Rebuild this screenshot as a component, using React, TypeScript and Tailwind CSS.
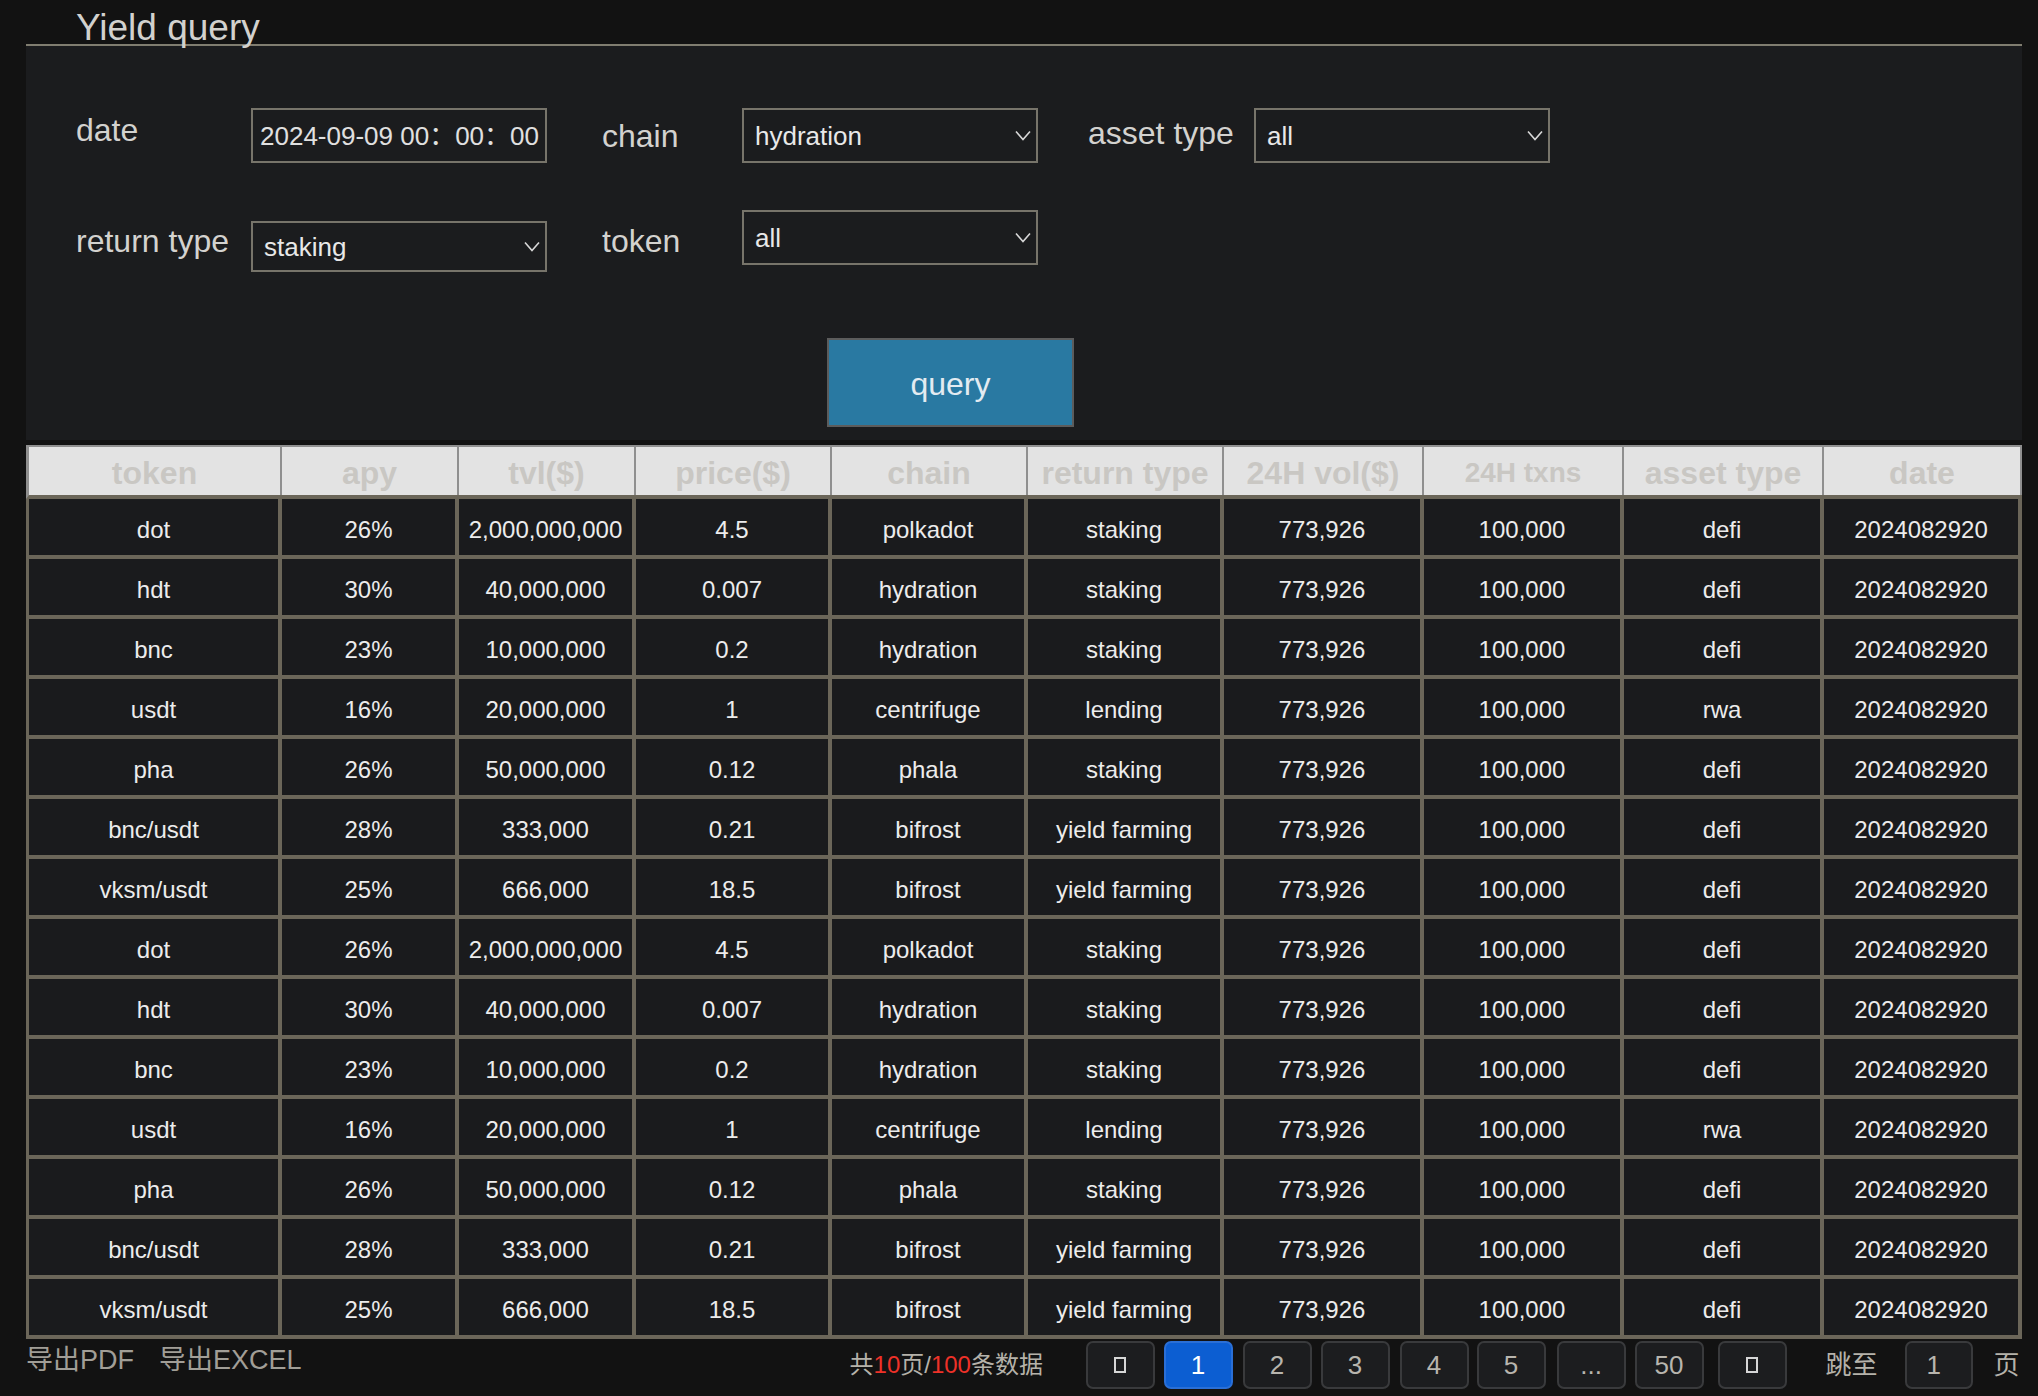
import React from "react";

const font = { fontFamily: '"Liberation Sans", Arial, "Noto Sans CJK SC", sans-serif' };

const rows = [
  ["dot", "26%", "2,000,000,000", "4.5", "polkadot", "staking", "773,926", "100,000", "defi", "2024082920"],
  ["hdt", "30%", "40,000,000", "0.007", "hydration", "staking", "773,926", "100,000", "defi", "2024082920"],
  ["bnc", "23%", "10,000,000", "0.2", "hydration", "staking", "773,926", "100,000", "defi", "2024082920"],
  ["usdt", "16%", "20,000,000", "1", "centrifuge", "lending", "773,926", "100,000", "rwa", "2024082920"],
  ["pha", "26%", "50,000,000", "0.12", "phala", "staking", "773,926", "100,000", "defi", "2024082920"],
  ["bnc/usdt", "28%", "333,000", "0.21", "bifrost", "yield farming", "773,926", "100,000", "defi", "2024082920"],
  ["vksm/usdt", "25%", "666,000", "18.5", "bifrost", "yield farming", "773,926", "100,000", "defi", "2024082920"],
];

const allRows = [...rows, ...rows];

const headers = ["token", "apy", "tvl($)", "price($)", "chain", "return type", "24H vol($)", "24H txns", "asset type", "date"];

const gridCols =
  "grid grid-cols-[253px_177px_177px_196px_196px_196px_200px_200px_200px_198px]";

function Chevron() {
  return (
    <svg width="16" height="11" viewBox="0 0 16 11" className="shrink-0">
      <polyline points="1,1.5 8,9.5 15,1.5" fill="none" stroke="#d8d8d8" strokeWidth="1.6" />
    </svg>
  );
}

function Select({ value, className = "" }: { value: string; className?: string }) {
  return (
    <div
      className={`flex w-[296px] items-center justify-between border-2 border-[#77746a] pl-[11px] pr-[5px] text-[26px] text-[#e8e8e8] ${className}`}
    >
      <span className="leading-none">{value}</span>
      <Chevron />
    </div>
  );
}

function Tofu() {
  // the arrow glyphs render as empty boxes in the original
  return <span className="block h-[16px] w-[12px] border-2 border-[#d6d6d6]" />;
}

const pages = [
  { label: "prev", cls: "ml-0" },
  { label: "1", cls: "ml-[9px]", active: true },
  { label: "2", cls: "ml-[10px]" },
  { label: "3", cls: "ml-[9px]" },
  { label: "4", cls: "ml-[10px]" },
  { label: "5", cls: "ml-[8px]" },
  { label: "...", cls: "ml-[11px]" },
  { label: "50", cls: "ml-[9px]" },
  { label: "next", cls: "ml-[14px]" },
];

export default function App() {
  return (
    <div className="h-[1396px] w-[2038px] overflow-hidden bg-[#121212]" style={font}>
      <div className="h-[44px] pl-[76px] pt-[9px] text-[37px] leading-none text-[#d2d1ce]">Yield query</div>

      {/* filter panel */}
      <section className="ml-[26px] h-[396px] w-[1996px] border-t-2 border-[#807d70] bg-[#1b1c1e]">
        <div className="mt-[62px] flex h-[55px] items-center pl-[50px]">
          <span className="mb-[11px] w-[175px] text-[32px] leading-none text-[#d3d2cf]">date</span>
          <div className="flex h-[55px] w-[296px] items-center border-2 border-[#77746a] pl-[7px] text-[26px] leading-none text-[#e0e0e0]">
            2024-09-09 00：00：00
          </div>
          <span className="ml-[55px] w-[140px] text-[32px] leading-none text-[#d3d2cf]">chain</span>
          <Select value="hydration" className="h-[55px]" />
          <span className="mb-[5px] ml-[50px] w-[166px] text-[32px] leading-none text-[#d3d2cf]">asset type</span>
          <Select value="all" className="h-[55px]" />
        </div>

        <div className="mt-[47px] flex h-[62px] items-start pl-[50px]">
          <span className="mt-[15px] w-[175px] text-[32px] leading-none text-[#d3d2cf]">return type</span>
          <Select value="staking" className="mt-[11px] h-[51px]" />
          <span className="ml-[55px] mt-[15px] w-[140px] text-[32px] leading-none text-[#d3d2cf]">token</span>
          <Select value="all" className="h-[55px]" />
        </div>

        <button className="ml-[801px] mt-[66px] flex h-[89px] w-[247px] items-center justify-center border-2 border-[#5c5c5c] bg-[#2979a2] pt-[2px] text-[32px] text-[#e3ebf1]">
          query
        </button>
      </section>

      {/* table */}
      <div className="ml-[26px] mt-[5px] w-[1996px]">
        <div
          className={`${gridCols} h-[54px] border-l-[3px] border-t-2 border-b-4 border-l-[#8f8f8f] border-t-[#8f8f8f] border-b-[#6b6659] bg-[#e3e3e3]`}
        >
          {headers.map((h) => (
            <div
              key={h}
              className={`flex items-center justify-center border-r-2 border-[#8f8f8f] pt-[3px] font-bold leading-none text-[#c9c7c3] ${
                h === "24H txns" ? "text-[28px]" : "text-[32px]"
              }`}
            >
              {h}
            </div>
          ))}
        </div>
        {allRows.map((row, i) => (
          <div key={i} className={`${gridCols} h-[60px] border-b-4 border-l-[3px] border-[#6b6659] bg-[#1a1b1d]`}>
            {row.map((cell, j) => (
              <div
                key={j}
                className="flex items-center justify-center border-r-4 border-[#6b6659] pt-[5px] text-[24px] leading-none text-[#ececec]"
              >
                {cell}
              </div>
            ))}
          </div>
        ))}
      </div>

      {/* footer */}
      <div className="mt-[2px] flex h-[48px] items-center">
        <div className="mb-[10px] ml-[26px] flex gap-[25px] text-[27px] leading-none text-[#a19e97]">
          <span>导出PDF</span>
          <span>导出EXCEL</span>
        </div>
        <div className="ml-[548px] w-[236px] text-[24px] leading-none text-[#b5b2aa]">
          共<span className="text-[#ee3128]">10</span>页/<span className="text-[#ee3128]">100</span>条数据
        </div>
        {pages.map((p) => (
          <div
            key={p.label}
            className={`${p.cls} flex h-[48px] w-[69px] items-center justify-center rounded-[7px] border-2 text-[26px] leading-none ${
              p.active
                ? "border-[#2a6fd6] bg-[#0c5ed2] text-white"
                : "border-[#393a3c] bg-[#1c1d1f] text-[#b8b5ae]"
            }`}
          >
            {p.label === "prev" || p.label === "next" ? <Tofu /> : p.label}
          </div>
        ))}
        <span className="ml-[39px] text-[26px] leading-none text-[#b5b2aa]">跳至</span>
        <div className="ml-[27px] flex h-[48px] w-[68px] items-center rounded-[7px] border-2 border-[#393a3c] bg-[#1c1d1f] pl-[20px] text-[26px] leading-none text-[#b8b5ae]">
          1
        </div>
        <span className="ml-[21px] text-[26px] leading-none text-[#b5b2aa]">页</span>
      </div>
    </div>
  );
}
